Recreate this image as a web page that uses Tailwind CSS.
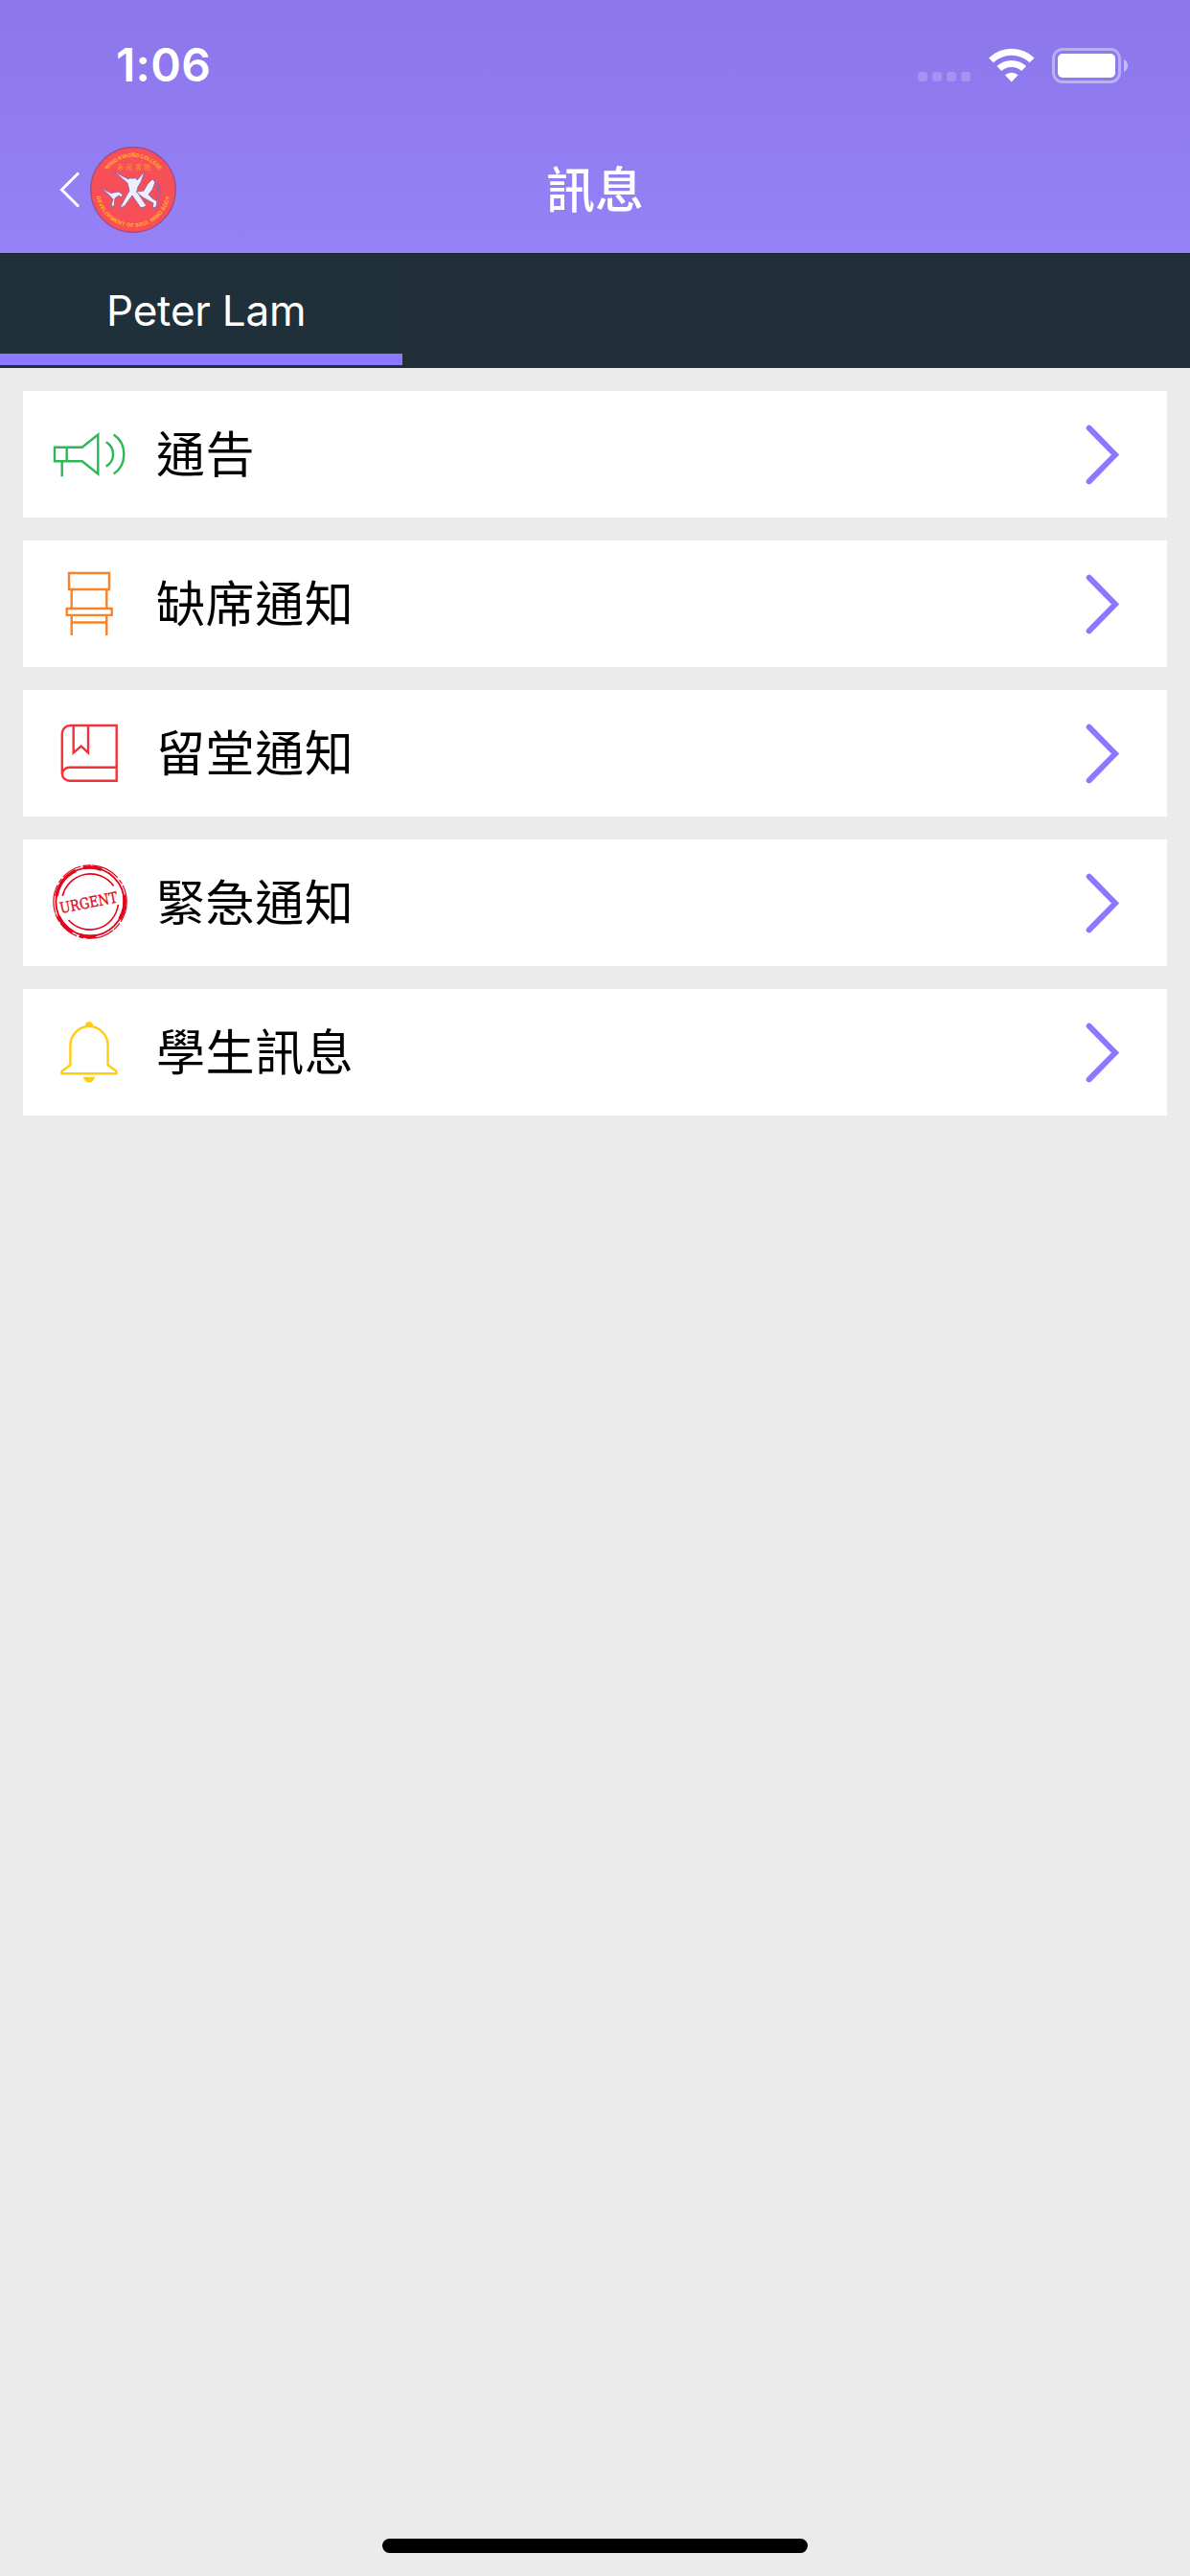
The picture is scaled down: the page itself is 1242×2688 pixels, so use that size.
<!DOCTYPE html>
<html lang="zh-Hant">
<head>
  <meta charset="UTF-8">
  <meta name="viewport" content="width=device-width, initial-scale=1.0">
  <title>訊息</title>
  <script src="https://cdn.jsdelivr.net/npm/@tailwindcss/browser@4"></script>
</head>
<body class="bg-[#ebebeb] font-['Inter','Noto_Sans_CJK_TC',sans-serif]">
  <div class="w-[1242px] h-[2688px] flex flex-col overflow-hidden">
    <!-- Header -->
    <header class="h-[264px] shrink-0 flex flex-col bg-linear-to-b from-[#8b76ea] to-[#9682f7] text-white">
      <!-- Status bar -->
      <div class="h-[136px] flex items-center justify-between pl-[121px] pr-[65px]">
        <span class="text-[48px] leading-none font-semibold tracking-[0.3px]">1:06</span>
        <div class="flex items-center">
          <div class="flex gap-[5px] mt-6 mr-[19px]">
            <span class="size-[10px] rounded-[3px] bg-white/20"></span>
            <span class="size-[10px] rounded-[3px] bg-white/20"></span>
            <span class="size-[10px] rounded-[3px] bg-white/20"></span>
            <span class="size-[10px] rounded-[3px] bg-white/20"></span>
          </div>
          <svg class="w-[48px] h-[37px] mr-[18px]" viewBox="0 0 48 37" fill="#fff">
            <path d="M0 10.5A34 34 0 0 1 47.5 10.5L42.7 15.3A27.5 27.5 0 0 0 4.8 15.3Z"/>
            <path d="M8.4 19A22.5 22.5 0 0 1 39.1 19L34.2 24A15.4 15.4 0 0 0 13.3 24Z"/>
            <path d="M16.9 28.3A10.4 10.4 0 0 1 30.6 28.3L23.75 35.5Z"/>
          </svg>
          <svg class="w-[79px] h-[37px]" viewBox="0 0 79 37">
            <rect x="1.5" y="1.5" width="69" height="34" rx="9.5" fill="none" stroke="#fff" stroke-opacity=".4" stroke-width="3"/>
            <rect x="6" y="6" width="60" height="25" rx="5" fill="#fff"/>
            <path d="M75 12C80.3 14.5 80.3 22.5 75 25Z" fill="#fff" fill-opacity=".5"/>
          </svg>
        </div>
      </div>
      <!-- Title bar -->
      <div class="h-[124px] grid grid-cols-3 items-center">
        <div class="flex items-center pl-[61px] gap-[9px]">
          <svg class="w-[24px] h-[40px]" viewBox="0 0 24 40" fill="none" stroke="#fff" stroke-width="3">
            <path d="M21 2.5L3.5 20L21 37.5"/>
          </svg>
          <svg class="size-[90px]" viewBox="0 0 90 90">
            <defs>
              <path id="top-arc" d="M11 45A34 34 0 0 1 79 45"/>
              <path id="bottom-arc" d="M6 45A39 39 0 0 0 84 45"/>
            </defs>
            <circle cx="45" cy="45" r="44.3" fill="#f74f58" stroke="#a04a86" stroke-width="1.2"/>
            <g fill="#ffb414" font-family="Inter, sans-serif" font-weight="700" font-size="5.5">
              <text><textPath href="#top-arc" startOffset="50%" text-anchor="middle" textLength="63">WING KWONG COLLEGE</textPath></text>
              <text><textPath href="#bottom-arc" startOffset="50%" text-anchor="middle" textLength="108">DEVELOPMENT OF SOUL MIND BODY</textPath></text>
            </g>
            <text x="28" y="23.7" font-size="7" textLength="35" fill="#ff9a2c" font-family="Noto Sans CJK TC, sans-serif">永光書院</text>
            <!-- three athletes -->
            <g stroke="#7f66b8" stroke-width=".9" stroke-linejoin="round" fill="#f1edfa">
              <path d="M25 26L40 34L40 33L49 33L49 35L57 26L53 37L50 42L49 47L59 62L53 64L44 51L36 62L31 64L37 53L41 46L39 38Z"/>
              <path d="M11 43L22 48.5L30 47L34 50L33 53L30 51L26 54L25 63L22 61L24 55L20 50.500Z"/>
              <path d="M48 47L56 46L60 39L65 34L68 37L65 45L61 50L65 54L70 57L69 63L65 64L66 59L55 53Z"/>
              <path d="M66 35L73 41L73 48L70 53L74 58L70 64M70 41L71 47" fill="none"/>
            </g>
          </svg>
        </div>
        <h1 class="text-center text-[51px] leading-none font-medium">訊息</h1>
      </div>
    </header>

    <!-- Student tabs -->
    <nav class="h-[120px] shrink-0 flex bg-[#222e38] border-t border-[#1b2630]">
      <div class="w-[420px] h-full flex flex-col bg-[#20303a]">
        <span class="h-[104px] flex items-center pl-[111px] pt-[14px] text-[44px] leading-none tracking-[-0.2px] text-white">Peter Lam</span>
        <span class="h-[12px] bg-[#8c78ff]"></span>
      </div>
    </nav>

    <!-- Message categories -->
    <main class="flex-1 flex flex-col gap-6 p-6">
      <a class="h-[132px] flex items-center bg-white pl-[30px] pr-[44px]">
        <svg class="size-[80px]" viewBox="0 0 80 80" fill="none" stroke="#2db757" stroke-width="2.4">
          <path d="M3 32.7H31.7L48.3 19.5V60.5L31.7 47.3H3ZM15.7 32.7V47.3M10.7 47.3V63.3"/>
          <path d="M56.7 27.3C66.5 33 66.5 47 56.7 52.7M64.7 19.5C78.9 29 78.9 51 64.7 60.5"/>
        </svg>
        <span class="flex-1 pl-[29px] text-[51px] leading-none tracking-[0.6px] text-black">通告</span>
        <svg class="w-[48px] h-[72px]" viewBox="0 0 48 72" fill="none" stroke="#8c78ff" stroke-width="6" stroke-linecap="round"><path d="M10.7 8.7L38 36.5L10.7 64.3"/></svg>
      </a>
      <a class="h-[132px] flex items-center bg-white pl-[30px] pr-[44px]">
        <svg class="size-[80px]" viewBox="0 0 80 80" fill="none" stroke="#f8822a" stroke-width="2.4">
          <path d="M18 8H60V25H18ZM20.7 25V45M57.3 25V45M15.7 45H62.7V51.9H15.7ZM20.7 52V73M57.3 52V73M20.7 59.5H57.3"/>
        </svg>
        <span class="flex-1 pl-[29px] text-[51px] leading-none tracking-[0.6px] text-black">缺席通知</span>
        <svg class="w-[48px] h-[72px]" viewBox="0 0 48 72" fill="none" stroke="#8c78ff" stroke-width="6" stroke-linecap="round"><path d="M10.7 8.7L38 36.5L10.7 64.3"/></svg>
      </a>
      <a class="h-[132px] flex items-center bg-white pl-[30px] pr-[44px]">
        <svg class="size-[80px]" viewBox="0 0 80 80" fill="none" stroke="#f0333a" stroke-width="2.4">
          <path d="M67.7 54.7H18.5A7.5 7 0 0 0 18.5 68.7H67.7V11H19.5A8.8 8.8 0 0 0 10.8 20V61.5"/>
          <path d="M22.7 11V39.5L30.7 32.7L38 39.5V11"/>
        </svg>
        <span class="flex-1 pl-[29px] text-[51px] leading-none tracking-[0.6px] text-black">留堂通知</span>
        <svg class="w-[48px] h-[72px]" viewBox="0 0 48 72" fill="none" stroke="#8c78ff" stroke-width="6" stroke-linecap="round"><path d="M10.7 8.7L38 36.5L10.7 64.3"/></svg>
      </a>
      <a class="h-[132px] flex items-center bg-white pl-[30px] pr-[44px]">
        <svg class="size-[80px] overflow-visible" viewBox="0 0 80 80" fill="none" stroke="#e2061c">
          <!-- worn outer rings -->
          <circle cx="40" cy="39" r="35.6" stroke-width="1.9"/>
          <circle cx="40" cy="39" r="38.2" stroke-width="1.2" stroke-dasharray="22 2 9 1 30 3 5 2"/>
          <path d="M5 33A36 36 0 0 1 25 6.500M33 3.6A36 36 0 0 1 52 5.4M75.500 32A36 36 0 0 1 71 57M7 54A36 36 0 0 0 22 70.500M29 73.7A36 36 0 0 0 46 74.8" stroke-width="3.6"/>
          <!-- inner ring, open around the lettering -->
          <path d="M11.3 33A29.7 29.7 0 0 1 64.5 22.5" stroke-width="1.6"/>
          <path d="M17.5 58A29.7 29.7 0 0 0 69.3 42" stroke-width="1.6"/>
          <text x="9.5" y="51" transform="rotate(-11 9.5 51)" font-family="DejaVu Serif, serif" font-size="15.5" textLength="61" lengthAdjust="spacingAndGlyphs" fill="#e2061c" stroke-width=".35">URGENT</text>
        </svg>
        <span class="flex-1 pl-[29px] text-[51px] leading-none tracking-[0.6px] text-black">緊急通知</span>
        <svg class="w-[48px] h-[72px]" viewBox="0 0 48 72" fill="none" stroke="#8c78ff" stroke-width="6" stroke-linecap="round"><path d="M10.7 8.7L38 36.5L10.7 64.3"/></svg>
      </a>
      <a class="h-[132px] flex items-center bg-white pl-[30px] pr-[44px]">
        <svg class="size-[80px]" viewBox="0 0 80 80" fill="none" stroke="#ffcd0f" stroke-width="2.4">
          <path d="M10.5 62.3V59.9L19.4 53.3V33A19.6 20 0 0 1 58.6 33V53.3L67.5 59.9V62.3Z"/>
          <path d="M35 14V11.5Q35.5 8 39 8Q42.5 8 43 11.5V14ZM32.7 65.7H45.3Q43.5 71.5 39 71.5Q34.5 71.5 32.7 65.7Z" fill="#ffcd0f" stroke="none"/>
        </svg>
        <span class="flex-1 pl-[29px] text-[51px] leading-none tracking-[0.6px] text-black">學生訊息</span>
        <svg class="w-[48px] h-[72px]" viewBox="0 0 48 72" fill="none" stroke="#8c78ff" stroke-width="6" stroke-linecap="round"><path d="M10.7 8.7L38 36.5L10.7 64.3"/></svg>
      </a>
    </main>

    <!-- Home indicator -->
    <div class="shrink-0 w-[444px] h-[15px] mx-auto mb-6 rounded-full bg-black"></div>
  </div>
</body>
</html>
